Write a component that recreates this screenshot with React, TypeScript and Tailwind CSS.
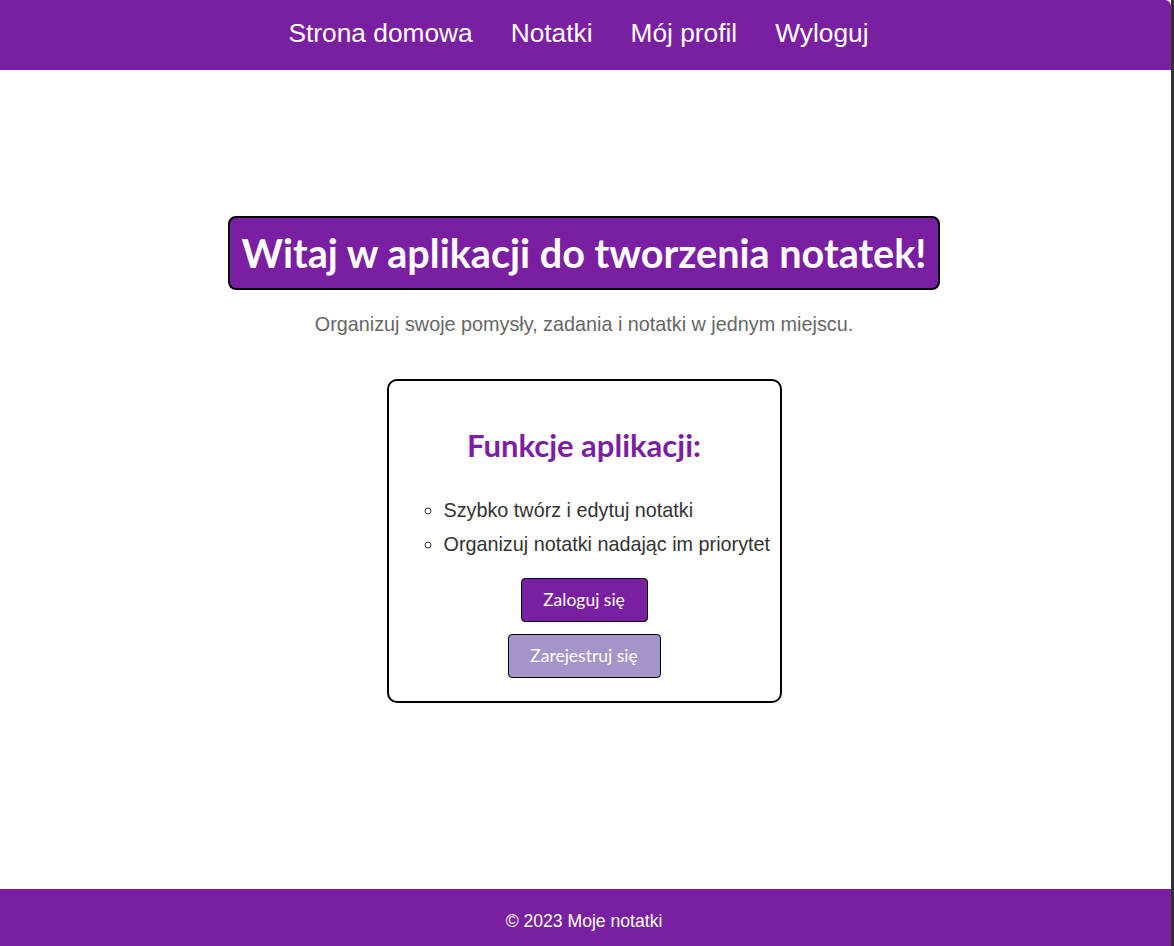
import React from 'react';

const navLinks = ['Strona domowa', 'Notatki', 'Mój profil', 'Wyloguj'];

const features = [
  'Szybko twórz i edytuj notatki',
  'Organizuj notatki nadając im priorytet',
];

const sans = "font-['Liberation_Sans',Arial,sans-serif]";
const lato = "font-['Lato','Noto_Sans',sans-serif]";

export default function App() {
  return (
    <div className="flex min-h-[946px] border-r-[3px] border-[#333]">
      <div className="flex flex-1 flex-col bg-white">
        <header className="flex h-[70px] items-center justify-center gap-[38px] rounded-tr-[6px] bg-[#7b1fa2] pr-[14px] pb-[2px]">
          {navLinks.map(l => (
            <a key={l} href="#" className={`${sans} text-[26.3px] text-white`}>
              {l}
            </a>
          ))}
        </header>

        <main className="flex flex-1 flex-col items-center pt-[146px] pr-[3px]">
          <h1
            className={`${lato} rounded-[8px] border-2 border-black bg-[#7b1fa2] px-[12px] py-[10px] text-[39.6px] leading-[50px] font-bold text-white`}
          >
            Witaj w aplikacji do tworzenia notatek!
          </h1>
          <p className={`${sans} mt-[22px] text-[19.8px] leading-[24px] text-[#666]`}>
            Organizuj swoje pomysły, zadania i notatki w jednym miejscu.
          </p>

          <div className="mt-[43px] flex w-[395px] flex-col items-center rounded-[10px] border-2 border-black px-[15px] pt-[46px] pb-[23px]">
            <h2 className={`${lato} text-[31px] leading-[36px] font-bold text-[#7b1fa2]`}>
              Funkcje aplikacji:
            </h2>
            <ul className={`${sans} mt-[30px] w-full list-[circle] pl-[40px] text-[19.8px] leading-[34px] text-[#333]`}>
              {features.map(f => (
                <li key={f} className="whitespace-nowrap">{f}</li>
              ))}
            </ul>
            <button
              className={`${lato} mt-[17px] h-[44px] w-[127px] rounded-[4px] border border-black bg-[#7b1fa2] text-[17.5px] text-white`}
            >
              Zaloguj się
            </button>
            <button
              className={`${lato} mt-[12px] h-[44px] w-[153px] rounded-[4px] border border-black bg-[#a594c9] text-[17.5px] text-white`}
            >
              Zarejestruj się
            </button>
          </div>
        </main>

        <footer className={`${sans} flex h-[57px] items-center justify-center bg-[#7b1fa2] pt-[8px] pr-[3px] text-[17.6px] text-white`}>
          © 2023 Moje notatki
        </footer>
      </div>
    </div>
  );
}
